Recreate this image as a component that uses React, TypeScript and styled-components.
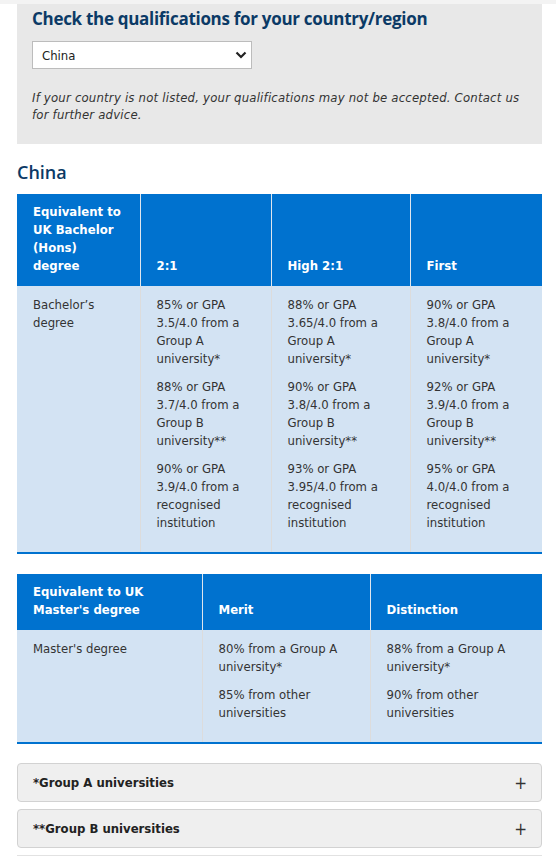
import React from "react";
import styled, { createGlobalStyle } from "styled-components";

const Global = createGlobalStyle`
  html, body { margin: 0; padding: 0; background: #fff; }
  body { font-family: "DejaVu Sans Condensed", "DejaVu Sans", sans-serif; color: #333; }
`;

const TopStrip = styled.div`
  height: 4px;
  background: #f3f3f3;
`;

const Page = styled.div`
  margin: 0 14px 0 17px;
`;

const Panel = styled.section`
  background: #e8e8e8;
  padding: 3px 15px 21px 15px;
`;

const PanelTitle = styled.h2`
  margin: 0;
  font-family: "Open Sans", sans-serif;
  font-weight: 700;
  font-size: 17px;
  line-height: 24px;
  color: #0b3a66;
  letter-spacing: -0.3px;
`;

const SelectWrap = styled.div`
  position: relative;
  width: 220px;
  margin-top: 10px;
`;

const Select = styled.select`
  appearance: none;
  -webkit-appearance: none;
  width: 100%;
  height: 28px;
  box-sizing: border-box;
  border: 1px solid #bcbcbc;
  border-radius: 0;
  background: #fff;
  padding: 0 24px 0 9px;
  font-family: inherit;
  font-size: 13px;
  color: #222;
  outline: none;
`;

const Chevron = styled.svg`
  position: absolute;
  right: 5px;
  top: 9px;
  width: 12px;
  height: 10px;
  pointer-events: none;
`;

const Note = styled.p`
  margin: 20px 0 0;
  font-style: italic;
  font-size: 13px;
  line-height: 17px;
  letter-spacing: 0.2px;
  color: #333;
`;

const CountryTitle = styled.h3`
  margin: 16px 0 10px;
  font-family: "Open Sans", sans-serif;
  font-weight: 600;
  font-size: 18px;
  line-height: 24px;
  color: #0b3a66;
`;

const Table = styled.table<{ $gap?: number }>`
  width: 100%;
  border-collapse: collapse;
  table-layout: fixed;
  font-size: 13px;
  line-height: 18px;
  border-bottom: 2px solid #0072cf;
  margin-bottom: ${(p) => p.$gap ?? 0}px;
`;

const Th = styled.th`
  background: #0072cf;
  color: #fff;
  font-weight: 700;
  text-align: left;
  vertical-align: bottom;
  padding: 9px 16px 11px 16px;
  border-left: 1px solid #dfe6ee;
  &:first-child { border-left: none; }
`;

const Td = styled.td`
  background: #d3e3f3;
  color: #333;
  vertical-align: top;
  padding: 10px 16px 10px 16px;
  border-left: 1px solid #dcdcdc;
  &:first-child { border-left: none; }
`;

const Para = styled.p`
  margin: 0 0 10px;
`;

const Accordion = styled.div`
  display: flex;
  align-items: center;
  justify-content: space-between;
  height: 39px;
  box-sizing: border-box;
  background: #efefef;
  border: 1px solid #d2d2d2;
  border-radius: 4px;
  padding: 0 14px 0 15px;
  margin-bottom: 7px;
  font-size: 13px;
  font-weight: 700;
  color: #222;
`;

const Plus = styled.span`
  font-size: 17px;
  font-weight: 400;
  color: #333;
`;

const NextEdge = styled.div`
  height: 6px;
  border-top: 1px solid #e2e2e2;
`;

type Col = { w: number };

const bachelorCols: Col[] = [{ w: 123 }, { w: 131 }, { w: 139 }, { w: 132 }];
const masterCols: Col[] = [{ w: 185 }, { w: 168 }, { w: 172 }];

const bachelorData = [
  [
    "85% or GPA 3.5/4.0 from a Group A university*",
    "88% or GPA 3.7/4.0 from a Group B university**",
    "90% or GPA 3.9/4.0 from a recognised institution",
  ],
  [
    "88% or GPA 3.65/4.0 from a Group A university*",
    "90% or GPA 3.8/4.0 from a Group B university**",
    "93% or GPA 3.95/4.0 from a recognised institution",
  ],
  [
    "90% or GPA 3.8/4.0 from a Group A university*",
    "92% or GPA 3.9/4.0 from a Group B university**",
    "95% or GPA 4.0/4.0 from a recognised institution",
  ],
];

const masterData = [
  ["80% from a Group A university*", "85% from other universities"],
  ["88% from a Group A university*", "90% from other universities"],
];

export default function App() {
  return (
    <>
      <Global />
      <TopStrip />
      <Page>
        <Panel>
          <PanelTitle>Check the qualifications for your country/region</PanelTitle>
          <SelectWrap>
            <Select defaultValue="China">
              <option>China</option>
            </Select>
            <Chevron viewBox="0 0 12 10">
              <path d="M1.5 2.5 L6 7 L10.5 2.5" fill="none" stroke="#222" strokeWidth="2.2" />
            </Chevron>
          </SelectWrap>
          <Note>
            If your country is not listed, your qualifications may not be accepted. Contact us for further advice.
          </Note>
        </Panel>

        <CountryTitle>China</CountryTitle>

        <Table $gap={20}>
          <colgroup>
            {bachelorCols.map((c, i) => (
              <col key={i} style={{ width: c.w }} />
            ))}
          </colgroup>
          <thead>
            <tr>
              <Th>Equivalent to UK Bachelor (Hons) degree</Th>
              <Th>2:1</Th>
              <Th>High 2:1</Th>
              <Th>First</Th>
            </tr>
          </thead>
          <tbody>
            <tr>
              <Td>Bachelor’s degree</Td>
              {bachelorData.map((col, i) => (
                <Td key={i}>
                  {col.map((t, j) => (
                    <Para key={j}>{t}</Para>
                  ))}
                </Td>
              ))}
            </tr>
          </tbody>
        </Table>

        <Table $gap={19}>
          <colgroup>
            {masterCols.map((c, i) => (
              <col key={i} style={{ width: c.w }} />
            ))}
          </colgroup>
          <thead>
            <tr>
              <Th>Equivalent to UK Master's degree</Th>
              <Th>Merit</Th>
              <Th>Distinction</Th>
            </tr>
          </thead>
          <tbody>
            <tr>
              <Td>Master's degree</Td>
              {masterData.map((col, i) => (
                <Td key={i}>
                  {col.map((t, j) => (
                    <Para key={j}>{t}</Para>
                  ))}
                </Td>
              ))}
            </tr>
          </tbody>
        </Table>

        <Accordion>
          <span>*Group A universities</span>
          <Plus>+</Plus>
        </Accordion>
        <Accordion>
          <span>**Group B universities</span>
          <Plus>+</Plus>
        </Accordion>
        <NextEdge />
      </Page>
    </>
  );
}
